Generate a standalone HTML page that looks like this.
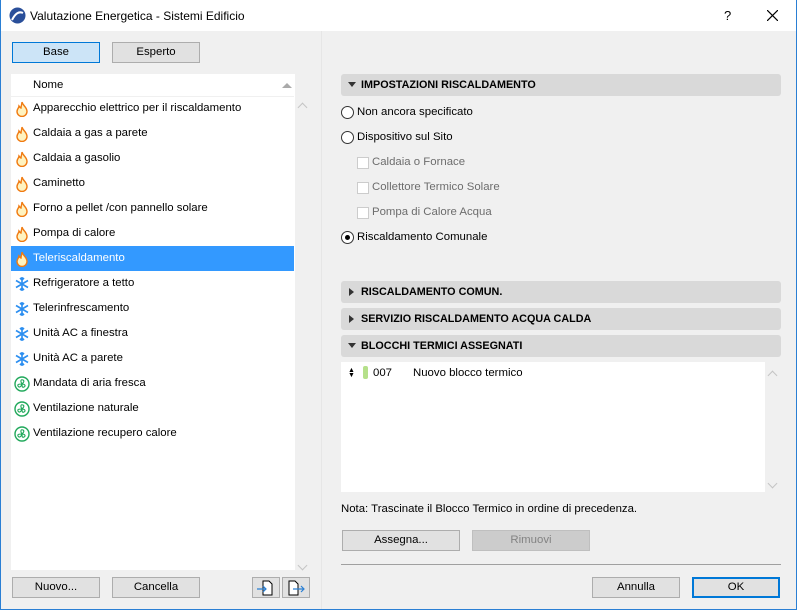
<!DOCTYPE html>
<html><head><meta charset="utf-8"><style>
*{box-sizing:border-box;margin:0;padding:0}
body{width:797px;height:610px;overflow:hidden;font-family:"Liberation Sans",sans-serif;font-size:11.4px;color:#000;background:#f0f0f0;position:relative}
.win{position:absolute;left:0;top:0;width:797px;height:610px;border:1px solid #2a7fd4;border-top:none}
.title{position:absolute;left:0;top:0;width:797px;height:31px;background:#fff}
.abs{position:absolute}
.btn{position:absolute;height:21px;background:#e1e1e1;border:1px solid #adadad;text-align:center;line-height:19px;font-size:11.4px}
.list{position:absolute;left:11px;top:74px;width:284px;height:496px;background:#fff}
.row{position:absolute;left:0;width:283px;height:25px;line-height:25px;padding-left:22px;white-space:nowrap}
.row svg{position:absolute;left:3px;top:5px}
.sel{background:#3399ff;color:#fff}
.sec{position:absolute;left:341px;width:440px;height:22px;background:#d9d9d9;border-radius:3px;font-weight:bold;font-size:10.8px;line-height:22px;padding-left:20px}
.sec i{position:absolute;left:7px;top:8px;width:0;height:0;border-left:4px solid transparent;border-right:4px solid transparent;border-top:5px solid #333}
.sec i.r{top:7px;left:8px;border-top:4px solid transparent;border-bottom:4px solid transparent;border-left:5px solid #333;border-right:none}
.rad{position:absolute;width:13px;height:13px;border:1px solid #333;border-radius:50%;background:#fff}
.chk{position:absolute;width:12px;height:12px;border:1px solid #ccc;background:#fff}
.gray{color:#6d6d6d}
.chev{position:absolute;width:7px;height:7px;border-left:1.5px solid #c4c4c4;border-top:1.5px solid #c4c4c4}
</style></head><body>
<div class="title"></div>
<svg class="abs" style="left:9px;top:7px" width="17" height="17" viewBox="0 0 17 17"><circle cx="8.5" cy="8.5" r="8" fill="#2a4f9a"/><path d="M3 13 Q8 3 14 6" stroke="#fff" stroke-width="2" fill="none"/></svg>
<div class="abs" style="left:30px;top:9px;font-size:12px">Valutazione Energetica - Sistemi Edificio</div>
<div class="abs" style="left:724px;top:8px;font-size:13px">?</div>
<svg class="abs" style="left:767px;top:10px" width="11" height="11"><path d="M0 0L11 11M11 0L0 11" stroke="#000" stroke-width="1.2"/></svg>

<div class="btn" style="left:12px;top:42px;width:88px;background:#cce4f7;border-color:#0078d7">Base</div>
<div class="btn" style="left:112px;top:42px;width:88px">Esperto</div>

<div class="list">
<div class="abs" style="left:22px;top:5px">Nome</div>
<div class="abs" style="left:271px;top:9px;border-left:5px solid transparent;border-right:5px solid transparent;border-bottom:5px solid #aaa"></div>
<div class="abs" style="left:0;top:22px;width:283px;height:1px;background:#f0f0f0"></div>
</div>
<div id="rows"></div>
<div class="chev" style="left:299px;top:104px;transform:rotate(45deg)"></div>
<div class="chev" style="left:299px;top:562px;transform:rotate(225deg)"></div>

<div class="btn" style="left:12px;top:577px;width:88px">Nuovo...</div>
<div class="btn" style="left:112px;top:577px;width:88px">Cancella</div>
<div class="btn" style="left:252px;top:577px;width:28px"><svg width="26" height="19" viewBox="0 0 26 19"><path d="M10 3h6l3 3v11h-9z" fill="#fff" stroke="#000"/><path d="M4 11h9M10 8l3 3-3 3" stroke="#2a7fd4" fill="none" stroke-width="1.2"/></svg></div>
<div class="btn" style="left:282px;top:577px;width:28px"><svg width="26" height="19" viewBox="0 0 26 19"><path d="M6 3h6l3 3v11h-9z" fill="#fff" stroke="#000"/><path d="M10 11h11M18 8l3 3-3 3" stroke="#2a7fd4" fill="none" stroke-width="1.2"/></svg></div>

<div class="abs" style="left:321px;top:31px;width:1px;height:578px;background:#e6e6e6"></div>

<div class="sec" style="top:74px"><i></i>IMPOSTAZIONI RISCALDAMENTO</div>
<div class="rad" style="left:341px;top:106px"></div><div class="abs" style="left:357px;top:106px">Non ancora specificato</div>
<div class="rad" style="left:341px;top:131px"></div><div class="abs" style="left:357px;top:131px">Dispositivo sul Sito</div>
<div class="chk" style="left:357px;top:157px"></div><div class="abs gray" style="left:372px;top:156px">Caldaia o Fornace</div>
<div class="chk" style="left:357px;top:182px"></div><div class="abs gray" style="left:372px;top:181px">Collettore Termico Solare</div>
<div class="chk" style="left:357px;top:207px"></div><div class="abs gray" style="left:372px;top:206px">Pompa di Calore Acqua</div>
<div class="rad" style="left:341px;top:231px"><div style="position:absolute;left:3px;top:3px;width:5px;height:5px;border-radius:50%;background:#000"></div></div><div class="abs" style="left:357px;top:231px">Riscaldamento Comunale</div>

<div class="sec" style="top:281px"><i class="r"></i>RISCALDAMENTO COMUN.</div>
<div class="sec" style="top:308px"><i class="r"></i>SERVIZIO RISCALDAMENTO ACQUA CALDA</div>
<div class="sec" style="top:335px"><i></i>BLOCCHI TERMICI ASSEGNATI</div>
<div class="abs" style="left:341px;top:362px;width:424px;height:130px;background:#fff"></div>
<div class="abs" style="left:348px;top:368px;font-size:7px;line-height:5px">&#9650;<br>&#9660;</div>
<div class="abs" style="left:363px;top:366px;width:5px;height:13px;background:#b5e08a;border-radius:2px"></div>
<div class="abs" style="left:373px;top:367px">007</div>
<div class="abs" style="left:413px;top:367px">Nuovo blocco termico</div>
<div class="chev" style="left:769px;top:372px;transform:rotate(45deg)"></div>
<div class="chev" style="left:769px;top:480px;transform:rotate(225deg)"></div>
<div class="abs" style="left:341px;top:503px">Nota: Trascinate il Blocco Termico in ordine di precedenza.</div>
<div class="btn" style="left:342px;top:530px;width:118px">Assegna...</div>
<div class="btn" style="left:472px;top:530px;width:118px;background:#cccccc;border-color:#bfbfbf;color:#838383">Rimuovi</div>
<div class="abs" style="left:341px;top:564px;width:440px;height:1px;background:#a0a0a0"></div>
<div class="btn" style="left:592px;top:577px;width:88px">Annulla</div>
<div class="btn" style="left:692px;top:577px;width:88px;border:2px solid #0078d7;line-height:17px">OK</div>
<div class="win"></div>

<script>
var flame='<svg width="16" height="16" viewBox="0 0 16 16"><path d="M8 1C9 5 13 6 13 10.5A5 5 0 0 1 3 10.5C3 8 5 7 5 5C6 6 6 7 7 7C7 5 8 3 8 1Z" fill="#fff3c0" stroke="#f07a10" stroke-width="1.4"/></svg>';
var snow='<svg width="16" height="16" viewBox="0 0 16 16" stroke="#2b8ef0" stroke-width="1.6" fill="none"><path d="M8 1v14M2 4.5l12 7M2 11.5l12-7M6 2l2 2 2-2M6 14l2-2 2 2"/></svg>';
var fan='<svg width="16" height="16" viewBox="0 0 16 16"><circle cx="8" cy="8" r="7" fill="#fff" stroke="#1fa85a" stroke-width="1.4"/><path d="M8 8C6 5 7 3 9 4S9 7 8 8ZM8 8C11 8 12 10 10 11S8 10 8 8ZM8 8C7 11 5 12 4 10S6 8 8 8Z" fill="none" stroke="#1fa85a" stroke-width="1.1"/></svg>';
var items=[["Apparecchio elettrico per il riscaldamento",flame],["Caldaia a gas a parete",flame],["Caldaia a gasolio",flame],["Caminetto",flame],["Forno a pellet /con pannello solare",flame],["Pompa di calore",flame],["Teleriscaldamento",flame],["Refrigeratore a tetto",snow],["Telerinfrescamento",snow],["Unità AC a finestra",snow],["Unità AC a parete",snow],["Mandata di aria fresca",fan],["Ventilazione naturale",fan],["Ventilazione recupero calore",fan]];
var h='';items.forEach(function(it,i){h+='<div class="row'+(i==6?' sel':'')+'" style="left:11px;top:'+(96+i*25)+'px">'+it[1]+it[0]+'</div>';});
document.getElementById('rows').innerHTML=h;
</script>
</body></html>
